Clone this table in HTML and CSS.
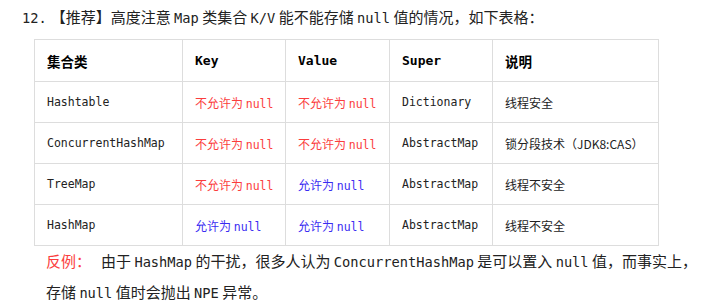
FILE: index.html
```html
<!DOCTYPE html>
<html>
<head>
<meta charset="utf-8">
<link rel="stylesheet" href="styles.css">
</head>
<body>
<p class="title"><span class="m num">12.</span>【推荐】高度注意 <span class="m">Map</span> 类集合 <span class="m">K/V</span> 能不能存储 <span class="m">null</span> 值的情况，如下表格：</p>
<table class="grid">
  <colgroup>
    <col class="c1"><col class="c2"><col class="c3"><col class="c4"><col class="c5">
  </colgroup>
  <thead>
    <tr><th>集合类</th><th class="m">Key</th><th class="m">Value</th><th class="m">Super</th><th>说明</th></tr>
  </thead>
  <tbody>
    <tr><td class="m">Hashtable</td><td class="no">不允许为 <span class="m">null</span></td><td class="no">不允许为 <span class="m">null</span></td><td class="m">Dictionary</td><td>线程安全</td></tr>
    <tr><td class="m">ConcurrentHashMap</td><td class="no">不允许为 <span class="m">null</span></td><td class="no">不允许为 <span class="m">null</span></td><td class="m">AbstractMap</td><td>锁分段技术（JDK8:CAS）</td></tr>
    <tr><td class="m">TreeMap</td><td class="no">不允许为 <span class="m">null</span></td><td class="yes">允许为 <span class="m">null</span></td><td class="m">AbstractMap</td><td>线程不安全</td></tr>
    <tr><td class="m">HashMap</td><td class="yes">允许为 <span class="m">null</span></td><td class="yes">允许为 <span class="m">null</span></td><td class="m">AbstractMap</td><td>线程不安全</td></tr>
  </tbody>
</table>
<p class="note"><span class="label">反例：</span>由于 <span class="m">HashMap</span> 的干扰，很多人认为 <span class="m">ConcurrentHashMap</span> 是可以置入 <span class="m">null</span> 值，而事实上，存储 <span class="m">null</span> 值时会抛出 <span class="m">NPE</span> 异常。</p>
</body>
</html>
```
FILE: styles.css
```css
html, body {
  margin: 0;
  padding: 0;
  background: #fff;
}
body {
  font-family: "Noto Sans CJK SC", "Noto Sans", sans-serif;
  color: #222;
}
.m {
  font-family: "DejaVu Sans Mono", "Noto Sans CJK SC", monospace;
}
.title {
  margin: 0;
  padding: 6px 0 0 22px;
  font-size: 15px;
  line-height: 22px;
  height: 39px;
  box-sizing: border-box;
  white-space: nowrap;
}
.title .m {
  font-size: 13.7px;
}
.title .num {
  margin-right: 4px;
}
.grid {
  margin: 0 0 0 34px;
  border-collapse: collapse;
  table-layout: fixed;
  width: 624px;
}
.c1 { width: 148px; }
.c2 { width: 103px; }
.c3 { width: 104px; }
.c4 { width: 103px; }
.c5 { width: 166px; }
.grid th, .grid td {
  border: 1px solid #ddd;
  padding: 0 12px;
  text-align: left;
  white-space: nowrap;
}
.grid th {
  height: 41px;
  font-weight: bold;
  font-size: 13.5px;
  color: #000;
}
.grid th.m {
  font-size: 13px;
}
.grid td {
  height: 40px;
  font-size: 12px;
  color: #222;
}
.grid td.m, .grid td .m {
  font-size: 11.5px;
}
.grid td.no { color: #fb3d3d; }
.grid td.yes { color: #3b2cf2; }
.note {
  margin: 0;
  padding: 0 10px 0 46px;
  font-size: 15px;
  line-height: 30px;
  color: #222;
}
.note .m {
  font-size: 13.7px;
}
.label {
  color: #fb3d3d;
  margin-right: 10px;
}
```
